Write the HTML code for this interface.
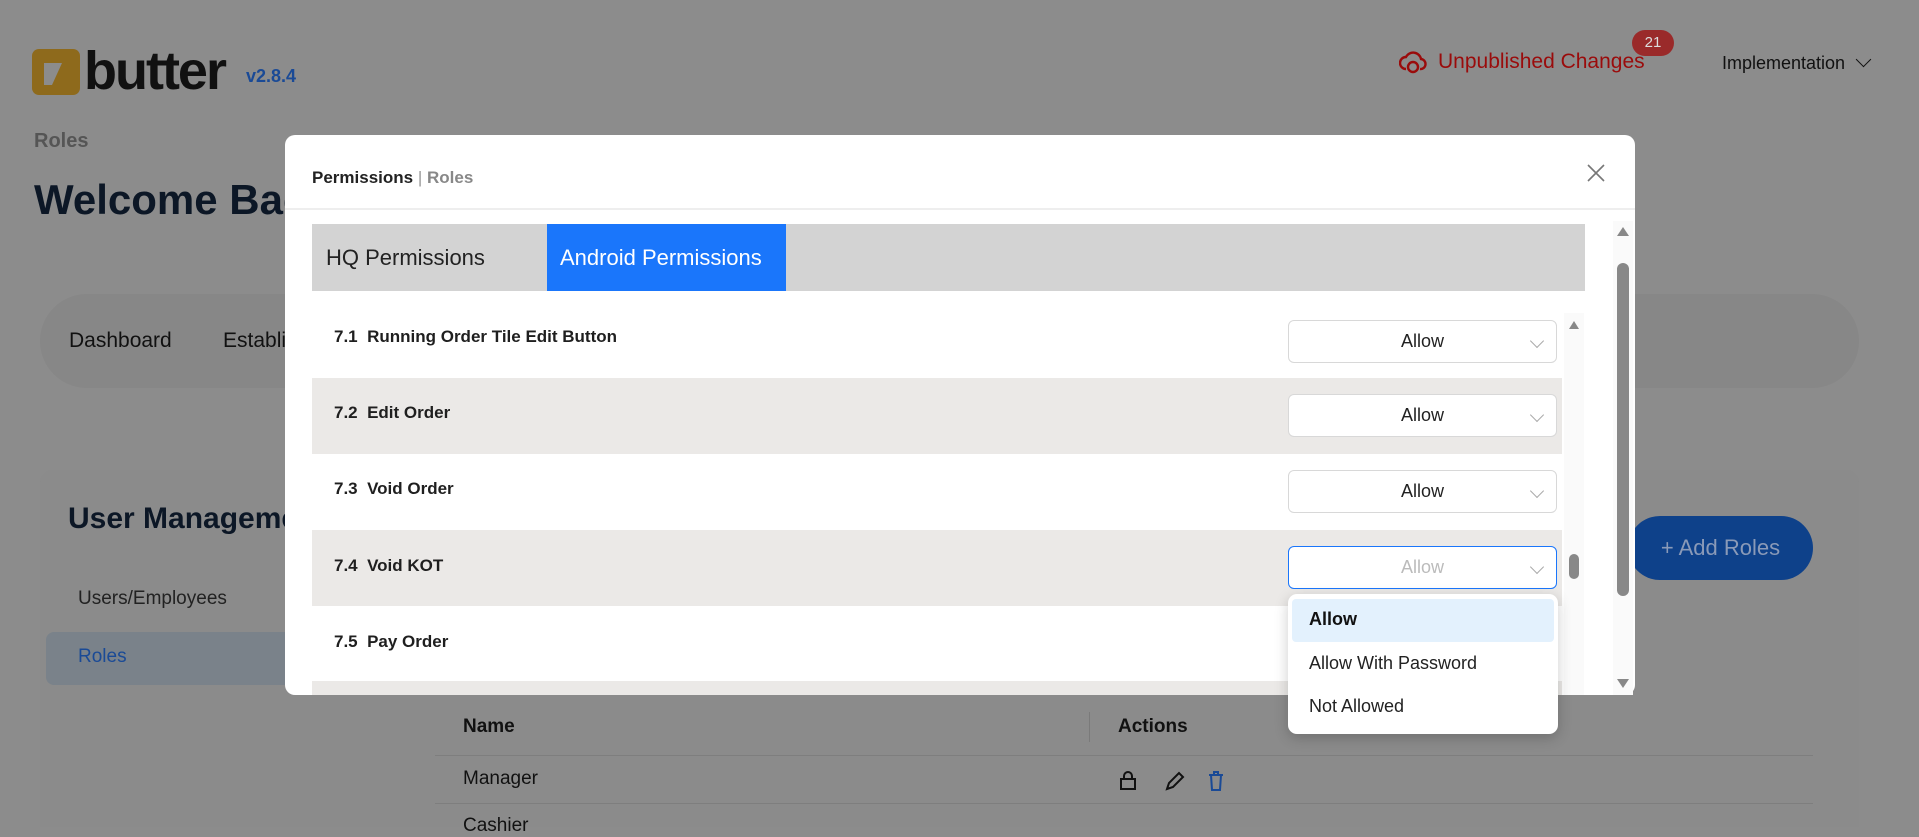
<!DOCTYPE html>
<html><head><meta charset="utf-8"><style>
*{box-sizing:border-box;margin:0;padding:0}
body{width:1919px;height:827px;overflow:hidden;background:#8c8c8c;font-family:"Liberation Sans",Arial,sans-serif;position:relative}
.a{position:absolute;white-space:nowrap}
.row{position:absolute;left:312px;width:1250px;height:76px}
.lbl{position:absolute;left:22px;font-weight:bold;font-size:17px;color:#1f1f1f}
.sel{position:absolute;left:976px;width:269px;height:43px;background:#fff;border:1px solid #d8d8d8;border-radius:6px;text-align:center;line-height:41px;font-size:18px;color:#222}
.chev{position:absolute;right:14px;top:15px;width:10px;height:10px;border-right:1px solid #aaa;border-bottom:1px solid #aaa;transform:rotate(45deg)}
</style></head><body>
<div class="a" style="left:32px;top:49px;width:48px;height:46px;background:#8e6a1c;border-radius:7px"></div>
<svg class="a" style="left:32px;top:49px" width="48" height="46"><path d="M12 14h18l-10 22h-8z" fill="#8c8c8c"/></svg>
<div class="a" style="left:84px;top:40px;font-size:54px;font-weight:900;color:#111;letter-spacing:-2px">butter</div>
<div class="a" style="left:246px;top:66px;font-size:18px;font-weight:bold;color:#1a4a96">v2.8.4</div>
<div class="a" style="left:34px;top:130px;font-size:20px;font-weight:bold;color:#555">Roles</div>
<div class="a" style="left:34px;top:176px;font-size:42px;font-weight:bold;color:#0c1726">Welcome Back</div>
<div class="a" style="left:40px;top:294px;width:1819px;height:94px;background:#878787;border-radius:47px"></div>
<div class="a" style="left:69px;top:329px;font-size:21px;color:#111">Dashboard</div>
<div class="a" style="left:223px;top:329px;font-size:21px;color:#111">Establishment</div>
<svg class="a" style="left:1399px;top:50px" width="28" height="24" viewBox="0 0 28 24"><path d="M7 19a6 6 0 0 1 0-12 8 8 0 0 1 15 2 5 5 0 0 1-1 10" fill="none" stroke="#9a0b0b" stroke-width="2.4"/><circle cx="14" cy="17" r="5" fill="none" stroke="#9a0b0b" stroke-width="2.4"/></svg>
<div class="a" style="left:1438px;top:50px;font-size:21px;color:#9a0b0b">Unpublished Changes</div>
<div class="a" style="left:1632px;top:30px;width:42px;height:26px;border-radius:13px;background:#9a2a2a;color:#ddd;font-size:15px;text-align:center;line-height:26px">21</div>
<div class="a" style="left:1722px;top:53px;font-size:18px;color:#111">Implementation</div>
<div class="a" style="left:1858px;top:54px;width:11px;height:11px;border-right:1.5px solid #111;border-bottom:1.5px solid #111;transform:rotate(45deg)"></div>
<div class="a" style="left:40px;top:470px;width:1819px;height:357px;background:#8b8b8b;border-radius:12px 12px 0 0"></div>
<div class="a" style="left:68px;top:502px;font-size:30px;font-weight:bold;color:#0c1726">User Management</div>
<div class="a" style="left:78px;top:588px;font-size:19px;color:#222">Users/Employees</div>
<div class="a" style="left:46px;top:632px;width:300px;height:53px;background:#7a828a;border-radius:8px"></div>
<div class="a" style="left:78px;top:646px;font-size:19px;color:#1a4a96">Roles</div>
<div class="a" style="left:1628px;top:516px;width:185px;height:64px;background:#0e418a;border-radius:32px;color:#8a9ab8;font-size:22px;text-align:center;line-height:64px">+ Add Roles</div>
<div class="a" style="left:463px;top:716px;font-size:19px;font-weight:bold;color:#111">Name</div>
<div class="a" style="left:1118px;top:716px;font-size:19px;font-weight:bold;color:#111">Actions</div>
<div class="a" style="left:1089px;top:712px;width:1px;height:30px;background:#7a7a7a"></div>
<div class="a" style="left:435px;top:755px;width:1378px;height:1px;background:#7e7e7e"></div>
<div class="a" style="left:435px;top:803px;width:1378px;height:1px;background:#7e7e7e"></div>
<div class="a" style="left:463px;top:768px;font-size:19px;color:#111">Manager</div>
<div class="a" style="left:463px;top:815px;font-size:19px;color:#111">Cashier</div>
<svg class="a" style="left:1119px;top:770px" width="110" height="22"><rect x="2" y="9" width="14" height="10" fill="none" stroke="#111" stroke-width="2"/><path d="M5 9V6a4 4 0 0 1 8 0v3" fill="none" stroke="#111" stroke-width="2"/><path d="M48 19l2-6 10-10 4 4-10 10z" fill="none" stroke="#111" stroke-width="2"/><path d="M90 5h14M95 5V2h4v3M92 5l1 15h8l1-15" fill="none" stroke="#1a4a96" stroke-width="2"/></svg>
<div class="a" style="left:285px;top:135px;width:1350px;height:560px;background:#fff;border-radius:10px;overflow:hidden"></div>
<div class="a" style="left:312px;top:168px;font-size:17px;font-weight:bold;color:#222">Permissions <span style="color:#999;font-weight:normal">|</span> <span style="color:#888">Roles</span></div>
<svg class="a" style="left:1587px;top:164px" width="18" height="18"><path d="M1 1L17 17M17 1L1 17" stroke="#777" stroke-width="1.6"/></svg>
<div class="a" style="left:285px;top:208px;width:1350px;height:2px;background:#eee"></div>
<div class="a" style="left:312px;top:224px;width:1273px;height:67px;background:#d3d3d3"></div>
<div class="a" style="left:326px;top:245px;font-size:22px;color:#222">HQ Permissions</div>
<div class="a" style="left:547px;top:224px;width:239px;height:67px;background:#1a76fb"></div>
<div class="a" style="left:560px;top:245px;font-size:22px;color:#fff">Android Permissions</div>
<div class="a" style="left:1613px;top:221px;width:20px;height:474px;background:#fafafa"></div>
<div class="a" style="left:1617px;top:227px;width:0;height:0;border-left:6px solid transparent;border-right:6px solid transparent;border-bottom:9px solid #888"></div>
<div class="a" style="left:1617px;top:263px;width:12px;height:333px;background:#888;border-radius:6px"></div>
<div class="a" style="left:1617px;top:679px;width:0;height:0;border-left:6px solid transparent;border-right:6px solid transparent;border-top:9px solid #888"></div>
<div class="row" style="top:291px;height:87px;background:#fff"><div class="lbl" style="top:36px">7.1&nbsp; Running Order Tile Edit Button</div><div class="sel" style="top:29px">Allow<div class="chev"></div></div></div>
<div class="row" style="top:378px;background:#ebe9e7"><div class="lbl" style="top:25px">7.2&nbsp; Edit Order</div><div class="sel" style="top:16px">Allow<div class="chev"></div></div></div>
<div class="row" style="top:454px;background:#fff"><div class="lbl" style="top:25px">7.3&nbsp; Void Order</div><div class="sel" style="top:16px">Allow<div class="chev"></div></div></div>
<div class="row" style="top:530px;background:#ebe9e7"><div class="lbl" style="top:26px">7.4&nbsp; Void KOT</div><div class="sel" style="top:16px;border:1.5px solid #1a76fb;color:#bbb">Allow<div class="chev"></div></div></div>
<div class="row" style="top:606px;background:#fff"><div class="lbl" style="top:26px">7.5&nbsp; Pay Order</div></div>
<div class="row" style="top:681px;height:14px;background:#ebe9e7"></div>
<div class="a" style="left:1564px;top:313px;width:20px;height:382px;background:#fafafa"></div>
<div class="a" style="left:1569px;top:321px;width:0;height:0;border-left:5px solid transparent;border-right:5px solid transparent;border-bottom:8px solid #888"></div>
<div class="a" style="left:1569px;top:554px;width:10px;height:25px;background:#888;border-radius:5px"></div>
<div class="a" style="left:1288px;top:594px;width:270px;height:140px;background:#fff;border-radius:9px;box-shadow:0 4px 14px rgba(0,0,0,.2)">
<div class="a" style="left:4px;top:5px;width:262px;height:43px;background:#e3f1fd;border-radius:4px"></div>
<div class="a" style="left:21px;top:15px;font-size:18px;font-weight:bold;color:#111">Allow</div>
<div class="a" style="left:21px;top:59px;font-size:18px;color:#222">Allow With Password</div>
<div class="a" style="left:21px;top:102px;font-size:18px;color:#222">Not Allowed</div>
</div>
</body></html>
